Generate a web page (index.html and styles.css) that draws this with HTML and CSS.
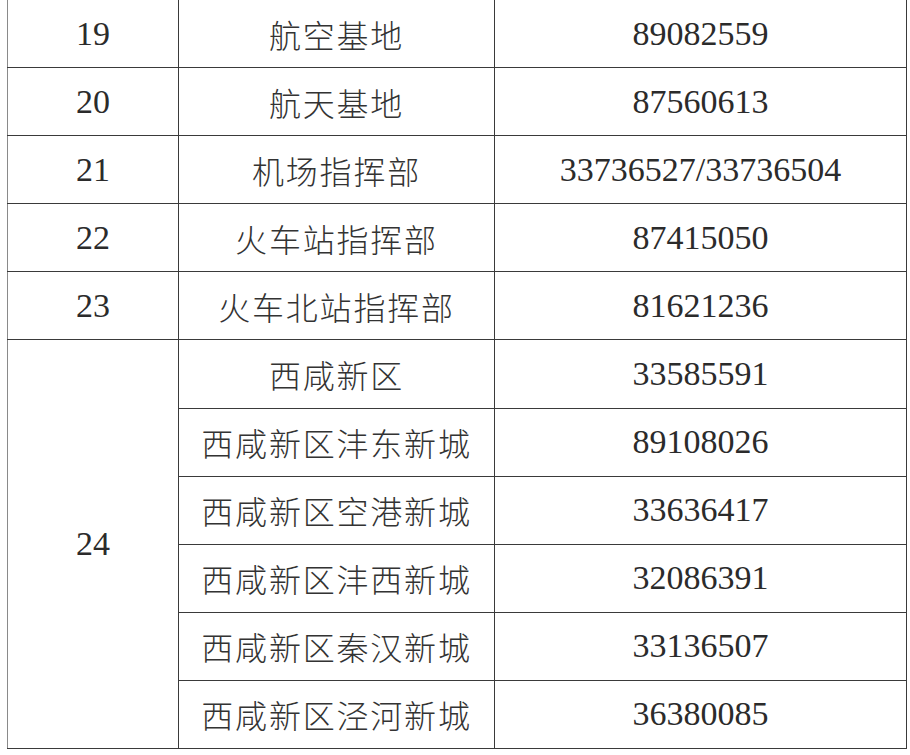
FILE: index.html
```html
<!DOCTYPE html>
<html lang="en">
<head>
<meta charset="utf-8">
<title>联系电话</title>
<link rel="stylesheet" href="styles.css">
</head>
<body>
<div class="wrap">
<table class="contacts">
  <colgroup>
    <col class="c-no">
    <col class="c-name">
    <col class="c-tel">
  </colgroup>
  <tbody>
    <tr><td class="no">19</td><td class="name" lang="zh-CN">航空基地</td><td class="tel">89082559</td></tr>
    <tr><td class="no">20</td><td class="name" lang="zh-CN">航天基地</td><td class="tel">87560613</td></tr>
    <tr><td class="no">21</td><td class="name" lang="zh-CN">机场指挥部</td><td class="tel">33736527/33736504</td></tr>
    <tr><td class="no">22</td><td class="name" lang="zh-CN">火车站指挥部</td><td class="tel">87415050</td></tr>
    <tr><td class="no">23</td><td class="name" lang="zh-CN">火车北站指挥部</td><td class="tel">81621236</td></tr>
    <tr><td class="no" rowspan="6">24</td><td class="name" lang="zh-CN">西咸新区</td><td class="tel">33585591</td></tr>
    <tr><td class="name" lang="zh-CN">西咸新区沣东新城</td><td class="tel">89108026</td></tr>
    <tr><td class="name" lang="zh-CN">西咸新区空港新城</td><td class="tel">33636417</td></tr>
    <tr><td class="name" lang="zh-CN">西咸新区沣西新城</td><td class="tel">32086391</td></tr>
    <tr><td class="name" lang="zh-CN">西咸新区秦汉新城</td><td class="tel">33136507</td></tr>
    <tr><td class="name" lang="zh-CN">西咸新区泾河新城</td><td class="tel">36380085</td></tr>
  </tbody>
</table>
</div>
</body>
</html>
```
FILE: styles.css
```css
html, body {
  margin: 0;
  padding: 0;
  background: #ffffff;
}

.wrap {
  padding-left: 7px;
  margin-top: -1px;
}

.contacts {
  border-collapse: collapse;
  table-layout: fixed;
  width: 899px;
  color: #2b2b2b;
  font-family: "Liberation Serif", "Times New Roman", "DejaVu Serif", serif;
}

.c-no { width: 171px; }
.c-name { width: 316px; }
.c-tel { width: 412px; }

.contacts td {
  border: 1px solid #3a3a3a;
  height: 67.1px;
  padding: 0;
  text-align: center;
  vertical-align: middle;
}

.contacts tr:first-child td {
  border-top-color: #555;
}

.contacts td.no:first-child {
  border-left-color: #8a8a8a;
}

.contacts .no,
.contacts .tel {
  font-family: "Liberation Serif", "Times New Roman", "DejaVu Serif", serif;
  font-size: 34px;
  font-weight: 400;
}

.contacts .name {
  font-family: "Noto Sans CJK SC", "Noto Sans CJK JP", sans-serif;
  font-weight: 300;
  font-size: 32px;
  letter-spacing: 1.8px;
  color: #333;
}
```
